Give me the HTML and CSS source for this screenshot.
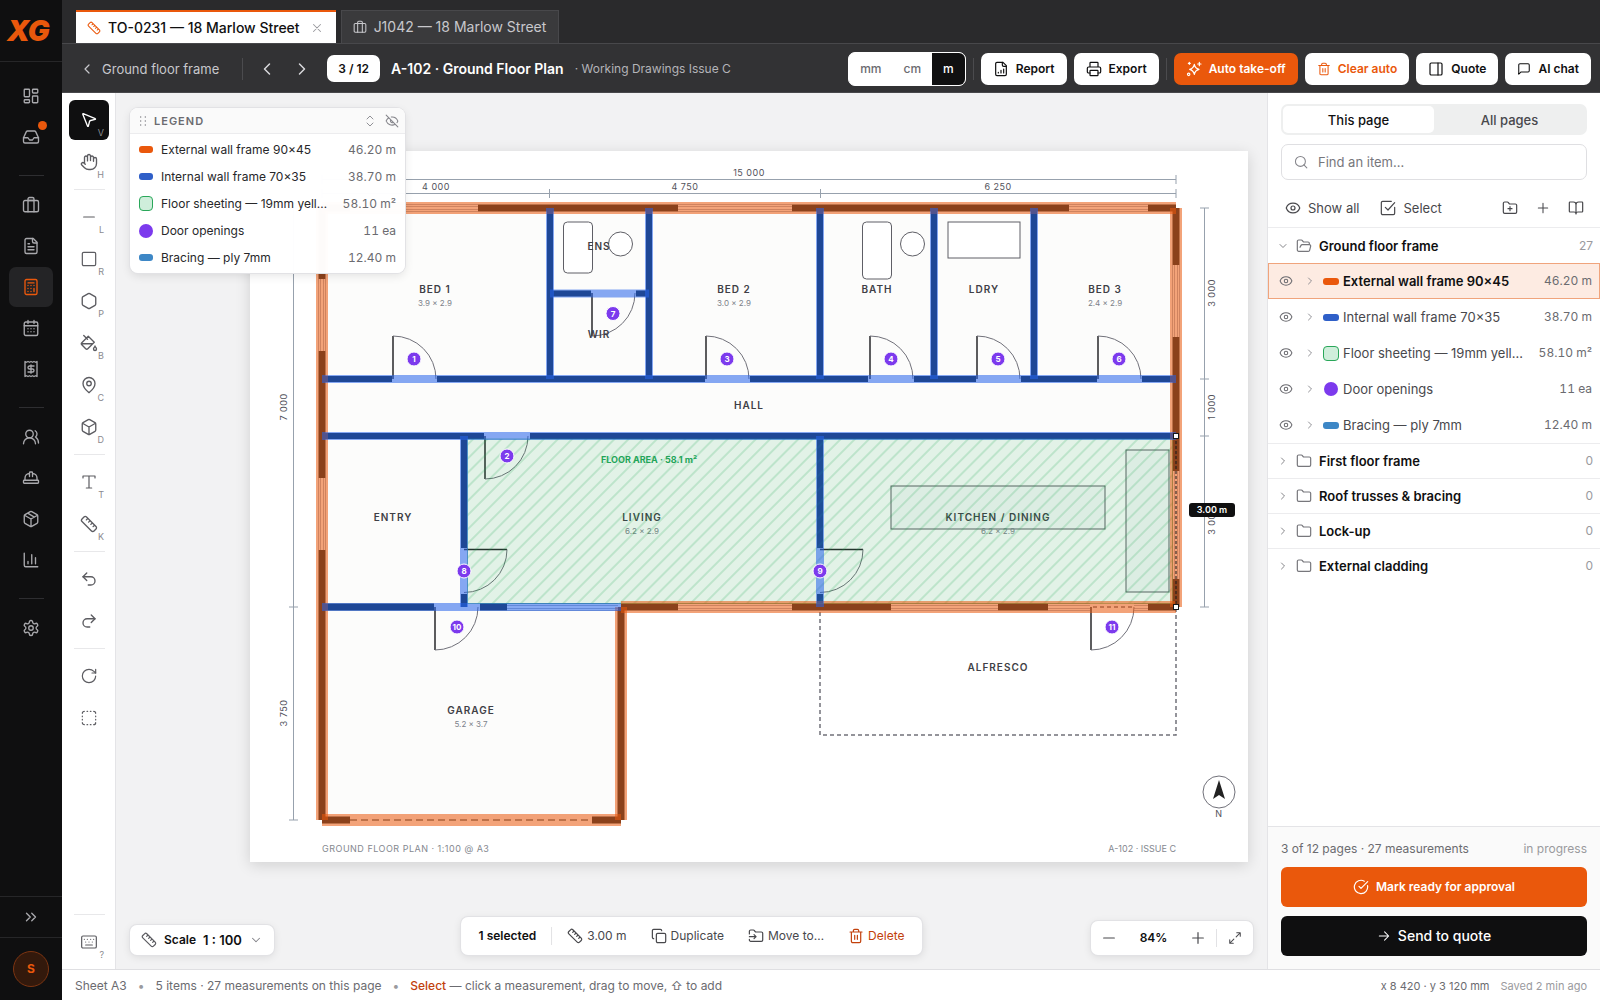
FILE: index.html
```html
<!DOCTYPE html>
<html lang="en">
<head>
<meta charset="utf-8">
<meta name="viewport" content="width=device-width, initial-scale=1">
<title>TO-0231 — 18 Marlow Street</title>
<link rel="stylesheet" href="styles.css">
</head>
<body>
<svg class="sprite" aria-hidden="true">
  <symbol id="i-dashboard" viewBox="0 0 24 24"><rect x="3" y="3" width="7" height="10" rx="1"/><rect x="14" y="3" width="7" height="5" rx="1"/><rect x="14" y="12" width="7" height="9" rx="1"/><rect x="3" y="17" width="7" height="4" rx="1"/></symbol>
  <symbol id="i-inbox" viewBox="0 0 24 24"><path d="M22 13h-6l-2 3h-4l-2-3H2"/><path d="M5.500 5.500 2 13v5a2 2 0 0 0 2 2h16a2 2 0 0 0 2-2v-5l-3.500-7.500A2 2 0 0 0 16.800 4H7.200a2 2 0 0 0-1.700 1.500z"/></symbol>
  <symbol id="i-briefcase" viewBox="0 0 24 24"><rect x="2" y="6" width="20" height="15" rx="2"/><path d="M8 21V4a2 2 0 0 1 2-2h4a2 2 0 0 1 2 2v17M8 6h8"/></symbol>
  <symbol id="i-file" viewBox="0 0 24 24"><path d="M15 2H6a2 2 0 0 0-2 2v16a2 2 0 0 0 2 2h12a2 2 0 0 0 2-2V7z"/><path d="M14 2v4a2 2 0 0 0 2 2h4M10 9H8M16 13H8M16 17H8"/></symbol>
  <symbol id="i-calc" viewBox="0 0 24 24"><rect x="4" y="2" width="16" height="20" rx="2"/><path d="M8 6.500h8M16 14v4M16 10h.01M12 10h.01M8 10h.01M12 14h.01M8 14h.01M12 18h.01M8 18h.01"/></symbol>
  <symbol id="i-calendar" viewBox="0 0 24 24"><path d="M8 2v4M16 2v4M3 9h18M8 13h.01M12 13h.01M16 13h.01M8 17h.01M12 17h.01M16 17h.01"/><rect x="3" y="4" width="18" height="18" rx="2"/></symbol>
  <symbol id="i-receipt" viewBox="0 0 24 24"><path d="M4 2v20l2-1 2 1 2-1 2 1 2-1 2 1 2-1 2 1V2l-2 1-2-1-2 1-2-1-2 1-2-1-2 1z"/><path d="M16 8h-6a2 2 0 1 0 0 4h4a2 2 0 1 1 0 4H8M12 17.500v-11"/></symbol>
  <symbol id="i-users" viewBox="0 0 24 24"><path d="M18 21a8 8 0 0 0-16 0M22 20c0-3.400-2-6.500-4-8a5 5 0 0 0-.45-8.300"/><circle cx="10" cy="8" r="5"/></symbol>
  <symbol id="i-hat" viewBox="0 0 24 24"><path d="M10 10V5a1 1 0 0 1 1-1h2a1 1 0 0 1 1 1v5M14 6a6 6 0 0 1 6 6v3M4 15v-3a6 6 0 0 1 6-6"/><rect x="2" y="15" width="20" height="4" rx="1"/></symbol>
  <symbol id="i-package" viewBox="0 0 24 24"><path d="M11 21.730a2 2 0 0 0 2 0l7-4A2 2 0 0 0 21 16V8a2 2 0 0 0-1-1.730l-7-4a2 2 0 0 0-2 0l-7 4A2 2 0 0 0 3 8v8a2 2 0 0 0 1 1.730zM12 22V12M3.300 7 12 12l8.700-5M7.500 4.270l9 5.150"/></symbol>
  <symbol id="i-chart" viewBox="0 0 24 24"><path d="M3 3v16a2 2 0 0 0 2 2h16M18 17V9M13 17V5M8 17v-3"/></symbol>
  <symbol id="i-gear" viewBox="0 0 24 24"><path d="M12.220 2h-.44a2 2 0 0 0-2 2v.18a2 2 0 0 1-1 1.730l-.43.25a2 2 0 0 1-2 0l-.15-.08a2 2 0 0 0-2.730.73l-.22.38a2 2 0 0 0 .73 2.730l.15.1a2 2 0 0 1 1 1.720v.51a2 2 0 0 1-1 1.740l-.15.09a2 2 0 0 0-.73 2.730l.22.38a2 2 0 0 0 2.730.73l.15-.08a2 2 0 0 1 2 0l.43.25a2 2 0 0 1 1 1.730V20a2 2 0 0 0 2 2h.44a2 2 0 0 0 2-2v-.18a2 2 0 0 1 1-1.730l.43-.25a2 2 0 0 1 2 0l.15.08a2 2 0 0 0 2.730-.73l.22-.39a2 2 0 0 0-.73-2.730l-.15-.08a2 2 0 0 1-1-1.740v-.5a2 2 0 0 1 1-1.740l.15-.09a2 2 0 0 0 .73-2.730l-.22-.38a2 2 0 0 0-2.730-.73l-.15.08a2 2 0 0 1-2 0l-.43-.25a2 2 0 0 1-1-1.730V4a2 2 0 0 0-2-2z"/><circle cx="12" cy="12" r="3"/></symbol>
  <symbol id="i-expand" viewBox="0 0 24 24"><path d="m6 17 5-5-5-5M13 17l5-5-5-5"/></symbol>
  <symbol id="i-ruler" viewBox="0 0 24 24"><path d="M21.300 15.300a2.400 2.400 0 0 1 0 3.400l-2.600 2.600a2.400 2.400 0 0 1-3.400 0L2.700 8.700a2.410 2.410 0 0 1 0-3.400l2.600-2.600a2.410 2.410 0 0 1 3.400 0zM14.500 12.500l2-2M11.500 9.500l2-2M8.500 6.500l2-2M17.500 15.500l2-2"/></symbol>
  <symbol id="i-x" viewBox="0 0 24 24"><path d="M18 6 6 18M6 6l12 12"/></symbol>
  <symbol id="i-left" viewBox="0 0 24 24"><path d="m15 18-6-6 6-6"/></symbol>
  <symbol id="i-right" viewBox="0 0 24 24"><path d="m9 18 6-6-6-6"/></symbol>
  <symbol id="i-down" viewBox="0 0 24 24"><path d="m6 9 6 6 6-6"/></symbol>
  <symbol id="i-report" viewBox="0 0 24 24"><path d="M15 2H6a2 2 0 0 0-2 2v16a2 2 0 0 0 2 2h12a2 2 0 0 0 2-2V7z"/><path d="M14 2v4a2 2 0 0 0 2 2h4M8 18v-1M12 18v-4M16 18v-6"/></symbol>
  <symbol id="i-print" viewBox="0 0 24 24"><path d="M6 18H4a2 2 0 0 1-2-2v-5a2 2 0 0 1 2-2h16a2 2 0 0 1 2 2v5a2 2 0 0 1-2 2h-2M6 9V3a1 1 0 0 1 1-1h10a1 1 0 0 1 1 1v6"/><rect x="6" y="14" width="12" height="8" rx="1"/></symbol>
  <symbol id="i-spark" viewBox="0 0 24 24"><path d="M12.500 5c.8 4.800 2.200 6.200 7 7.500-4.800 1.300-6.200 2.700-7 7.500-1-4.800-2.400-6.200-7-7.500 4.600-1.300 6-2.700 7-7.500zM20 2v5M22.500 4.500h-5"/><path d="M5 2v3M6.500 3.500h-3"/><circle cx="4" cy="20" r="1.800"/></symbol>
  <symbol id="i-trash" viewBox="0 0 24 24"><path d="M3 6h18M19 6v14a2 2 0 0 1-2 2H7a2 2 0 0 1-2-2V6M8 6V4a2 2 0 0 1 2-2h4a2 2 0 0 1 2 2v2M10 11v6M14 11v6"/></symbol>
  <symbol id="i-panel" viewBox="0 0 24 24"><rect x="3" y="3" width="18" height="18" rx="2"/><path d="M15 3v18"/></symbol>
  <symbol id="i-chat" viewBox="0 0 24 24"><path d="M21 15a2 2 0 0 1-2 2H7l-4 4V5a2 2 0 0 1 2-2h14a2 2 0 0 1 2 2z"/></symbol>
  <symbol id="i-cursor" viewBox="0 0 24 24"><path d="M3.700 4.200a.5.5 0 0 1 .6-.6l16 6.500a.5.5 0 0 1 0 .95l-6.200 1.600a2 2 0 0 0-1.400 1.400l-1.600 6.200a.5.5 0 0 1-.95 0z"/></symbol>
  <symbol id="i-hand" viewBox="0 0 24 24"><path d="M18 11V6a2 2 0 0 0-4 0M14 10V4a2 2 0 0 0-4 0v2M10 10.500V6a2 2 0 0 0-4 0v8M18 8a2 2 0 1 1 4 0v6a8 8 0 0 1-8 8h-2c-2.800 0-4.500-.86-5.990-2.340l-3.600-3.600a2 2 0 0 1 2.830-2.820L7 15"/></symbol>
  <symbol id="i-line" viewBox="0 0 24 24"><path d="M4 12h16"/></symbol>
  <symbol id="i-square" viewBox="0 0 24 24"><rect x="2" y="2" width="20" height="20" rx="2"/></symbol>
  <symbol id="i-hex" viewBox="0 0 24 24"><path d="M21 16V8a2 2 0 0 0-1-1.730l-7-4a2 2 0 0 0-2 0l-7 4A2 2 0 0 0 3 8v8a2 2 0 0 0 1 1.730l7 4a2 2 0 0 0 2 0l7-4A2 2 0 0 0 21 16z"/></symbol>
  <symbol id="i-bucket" viewBox="0 0 24 24"><path d="m19 11-8-8-8.600 8.600a2 2 0 0 0 0 2.800l5.200 5.200c.8.8 2 .8 2.800 0zM5 2l5 5M2 13h15M22 20a2 2 0 1 1-4 0c0-1.600 1.700-2.400 2-4 .3 1.600 2 2.400 2 4z"/></symbol>
  <symbol id="i-pin" viewBox="0 0 24 24"><path d="M20 10c0 5-5.500 10.200-7.400 11.800a1 1 0 0 1-1.200 0C9.500 20.200 4 15 4 10a8 8 0 0 1 16 0"/><circle cx="12" cy="10" r="3"/></symbol>
  <symbol id="i-cube" viewBox="0 0 24 24"><path d="M21 8a2 2 0 0 0-1-1.730l-7-4a2 2 0 0 0-2 0l-7 4A2 2 0 0 0 3 8v8a2 2 0 0 0 1 1.730l7 4a2 2 0 0 0 2 0l7-4A2 2 0 0 0 21 16zM3.300 7l8.700 5 8.700-5M12 22V12"/></symbol>
  <symbol id="i-type" viewBox="0 0 24 24"><path d="M3 6V3h18v3M12 3v18M8 21h8"/></symbol>
  <symbol id="i-undo" viewBox="0 0 24 24"><path d="M9 14 4 9l5-5"/><path d="M4 9h10.500a5.500 5.500 0 0 1 0 11H11"/></symbol>
  <symbol id="i-redo" viewBox="0 0 24 24"><path d="m15 14 5-5-5-5"/><path d="M20 9H9.500a5.500 5.500 0 0 0 0 11H13"/></symbol>
  <symbol id="i-rotate" viewBox="0 0 24 24"><path d="M22 12a10 10 0 1 1-10-10c2.800 0 5.400 1.100 7.400 3L22 7.500"/><path d="M22 2v5.500h-5.500"/></symbol>
  <symbol id="i-marquee" viewBox="0 0 24 24"><path d="M5 2a3 3 0 0 0-3 3M19 2a3 3 0 0 1 3 3M22 19a3 3 0 0 1-3 3M5 22a3 3 0 0 1-3-3M9 2h1M9 22h1M14 2h1M14 22h1M2 9v1M22 9v1M2 14v1M22 14v1"/></symbol>
  <symbol id="i-keys" viewBox="0 0 24 24"><rect x="1" y="3" width="22" height="18" rx="2"/><path d="M5 8h.01M9.500 8h.01M14.500 8h.01M19 8h.01M7 12h.01M12 12h.01M17 12h.01M7 16.500h10"/></symbol>
  <symbol id="i-grip" viewBox="0 0 24 24"><path d="M8 5h.01M8 12h.01M8 19h.01M16 5h.01M16 12h.01M16 19h.01"/></symbol>
  <symbol id="i-updown" viewBox="0 0 24 24"><path d="m6 16 6 6 6-6M6 8l6-6 6 6"/></symbol>
  <symbol id="i-eye" viewBox="0 0 24 24"><path d="M2 12.300a1 1 0 0 1 0-.7 10.700 10.700 0 0 1 20 0 1 1 0 0 1 0 .7 10.700 10.700 0 0 1-20 0z"/><circle cx="12" cy="12" r="3"/></symbol>
  <symbol id="i-eyeoff" viewBox="0 0 24 24"><path d="M10.700 5.100a10.700 10.700 0 0 1 11.200 6.600 1 1 0 0 1 0 .7 10.700 10.700 0 0 1-1.400 2.500M14.100 14.200a3 3 0 0 1-4.200-4.200M17.500 17.500a10.700 10.700 0 0 1-15.400-5.200 1 1 0 0 1 0-.7 10.700 10.700 0 0 1 4.400-5.100M2 2l20 20"/></symbol>
  <symbol id="i-search" viewBox="0 0 24 24"><circle cx="11" cy="11" r="8.500"/><path d="m22 22-5-5"/></symbol>
  <symbol id="i-check" viewBox="0 0 24 24"><path d="M22 11v9a2 2 0 0 1-2 2H4a2 2 0 0 1-2-2V4a2 2 0 0 1 2-2h13"/><path d="m8 11 4 4L22 4"/></symbol>
  <symbol id="i-folderadd" viewBox="0 0 24 24"><path d="M20 20a2 2 0 0 0 2-2V8a2 2 0 0 0-2-2h-7.900a2 2 0 0 1-1.700-.9l-.8-1.200A2 2 0 0 0 7.900 3H4a2 2 0 0 0-2 2v13a2 2 0 0 0 2 2zM12 10v6M9 13h6"/></symbol>
  <symbol id="i-folder" viewBox="0 0 24 24"><path d="M20 20a2 2 0 0 0 2-2V8a2 2 0 0 0-2-2h-7.900a2 2 0 0 1-1.700-.9l-.8-1.200A2 2 0 0 0 7.900 3H4a2 2 0 0 0-2 2v13a2 2 0 0 0 2 2z"/></symbol>
  <symbol id="i-folderopen" viewBox="0 0 24 24"><path d="m6 14 1.500-2.900A2 2 0 0 1 9.240 10H20a2 2 0 0 1 1.940 2.500l-1.540 6a2 2 0 0 1-1.950 1.500H4a2 2 0 0 1-2-2V5a2 2 0 0 1 2-2h3.900a2 2 0 0 1 1.690.9l.81 1.200a2 2 0 0 0 1.670.9H18a2 2 0 0 1 2 2v2"/></symbol>
  <symbol id="i-foldermove" viewBox="0 0 24 24"><path d="M2 9V5a2 2 0 0 1 2-2h3.900a2 2 0 0 1 1.690.9l.81 1.200a2 2 0 0 0 1.670.9H20a2 2 0 0 1 2 2v10a2 2 0 0 1-2 2H4a2 2 0 0 1-2-2v-1M2 13h10M9 16l3-3-3-3"/></symbol>
  <symbol id="i-plus" viewBox="0 0 24 24"><path d="M4 12h16M12 4v16"/></symbol>
  <symbol id="i-book" viewBox="0 0 24 24"><path d="M12 7v14M3 18a1 1 0 0 1-1-1V4a1 1 0 0 1 1-1h5a4 4 0 0 1 4 4 4 4 0 0 1 4-4h5a1 1 0 0 1 1 1v13a1 1 0 0 1-1 1h-6a3 3 0 0 0-3 3 3 3 0 0 0-3-3z"/></symbol>
  <symbol id="i-copy" viewBox="0 0 24 24"><rect x="8" y="8" width="14" height="14" rx="2"/><path d="M4 16a2 2 0 0 1-2-2V4a2 2 0 0 1 2-2h10a2 2 0 0 1 2 2"/></symbol>
  <symbol id="i-full" viewBox="0 0 24 24"><path d="M15 3h6v6M9 21H3v-6M21 3l-7 7M3 21l7-7"/></symbol>
  <symbol id="i-done" viewBox="0 0 24 24"><path d="M21.800 10A10 10 0 1 1 17 3.300M9 11l3 3L22 4"/></symbol>
  <symbol id="i-arrow" viewBox="0 0 24 24"><path d="M4 12h16M13 5l7 7-7 7"/></symbol>
</svg>

<div class="app">
  <nav class="rail" aria-label="Main">
    <a class="logo" href="#"><svg width="56" height="40" role="img" aria-label="XG"><text x="4" y="30">XG</text></svg></a>
    <div class="rail-items">
      <a href="#" aria-label="Dashboard"><svg class="ico"><use href="#i-dashboard"/></svg></a>
      <a href="#" aria-label="Inbox"><svg class="ico"><use href="#i-inbox"/></svg><span class="dot"></span></a>
      <hr>
      <a href="#" aria-label="Jobs"><svg class="ico"><use href="#i-briefcase"/></svg></a>
      <a href="#" aria-label="Quotes"><svg class="ico"><use href="#i-file"/></svg></a>
      <a class="on" href="#" aria-label="Take-offs"><svg class="ico"><use href="#i-calc"/></svg></a>
      <a href="#" aria-label="Calendar"><svg class="ico"><use href="#i-calendar"/></svg></a>
      <a href="#" aria-label="Invoices"><svg class="ico"><use href="#i-receipt"/></svg></a>
      <hr>
      <a href="#" aria-label="People"><svg class="ico"><use href="#i-users"/></svg></a>
      <a href="#" aria-label="Sites"><svg class="ico"><use href="#i-hat"/></svg></a>
      <a href="#" aria-label="Materials"><svg class="ico"><use href="#i-package"/></svg></a>
      <a href="#" aria-label="Reports"><svg class="ico"><use href="#i-chart"/></svg></a>
      <hr>
      <a href="#" aria-label="Settings"><svg class="ico"><use href="#i-gear"/></svg></a>
    </div>
    <button class="rail-expand" aria-label="Expand menu"><svg class="ico"><use href="#i-expand"/></svg></button>
    <div class="rail-user"><button class="avatar">S</button></div>
  </nav>

  <div class="main">
    <div class="tabs">
      <div class="tab on"><svg class="ico s14"><use href="#i-ruler"/></svg><a href="#">TO-0231 — 18 Marlow Street</a><button aria-label="Close tab"><svg class="ico s14"><use href="#i-x"/></svg></button></div>
      <div class="tab"><svg class="ico s14"><use href="#i-briefcase"/></svg><a href="#">J1042 — 18 Marlow Street</a></div>
    </div>

    <header class="topbar">
      <a class="back" href="#"><svg class="ico s16"><use href="#i-left"/></svg>Ground floor frame</a>
      <span class="vr"></span>
      <div class="pager">
        <button aria-label="Previous page"><svg class="ico s20"><use href="#i-left"/></svg></button>
        <button aria-label="Next page"><svg class="ico s20"><use href="#i-right"/></svg></button>
        <button class="count">3 / 12</button>
      </div>
      <h1>A-102 · Ground Floor Plan</h1>
      <span class="issue">· Working Drawings Issue C</span>
      <div class="actions">
        <div class="units"><button>mm</button><button>cm</button><button class="on">m</button></div>
        <span class="vr"></span>
        <button class="btn"><svg class="ico s16"><use href="#i-report"/></svg>Report</button>
        <button class="btn"><svg class="ico s16"><use href="#i-print"/></svg>Export</button>
        <span class="vr"></span>
        <button class="btn primary"><svg class="ico s16"><use href="#i-spark"/></svg>Auto take-off</button>
        <button class="btn danger"><svg class="ico s14"><use href="#i-trash"/></svg>Clear auto</button>
        <button class="btn"><svg class="ico s16"><use href="#i-panel"/></svg>Quote</button>
        <button class="btn"><svg class="ico s14"><use href="#i-chat"/></svg>AI chat</button>
      </div>
    </header>

    <div class="work">
      <div class="tools" role="toolbar" aria-label="Drawing tools">
        <button class="on" aria-label="Select"><svg class="ico s18"><use href="#i-cursor"/></svg><kbd>V</kbd></button>
        <button aria-label="Pan"><svg class="ico s18"><use href="#i-hand"/></svg><kbd>H</kbd></button>
        <hr>
        <button aria-label="Line"><svg class="ico s16"><use href="#i-line"/></svg><kbd>L</kbd></button>
        <button aria-label="Rectangle"><svg class="ico s16"><use href="#i-square"/></svg><kbd>R</kbd></button>
        <button aria-label="Polygon"><svg class="ico s18"><use href="#i-hex"/></svg><kbd>P</kbd></button>
        <button aria-label="Fill"><svg class="ico s18"><use href="#i-bucket"/></svg><kbd>B</kbd></button>
        <button aria-label="Count"><svg class="ico s18"><use href="#i-pin"/></svg><kbd>C</kbd></button>
        <button aria-label="Volume"><svg class="ico s18"><use href="#i-cube"/></svg><kbd>D</kbd></button>
        <hr>
        <button aria-label="Text"><svg class="ico s16"><use href="#i-type"/></svg><kbd>T</kbd></button>
        <button aria-label="Calibrate"><svg class="ico s18"><use href="#i-ruler"/></svg><kbd>K</kbd></button>
        <hr>
        <button aria-label="Undo"><svg class="ico s18"><use href="#i-undo"/></svg></button>
        <button aria-label="Redo"><svg class="ico s18"><use href="#i-redo"/></svg></button>
        <hr>
        <button aria-label="Rotate"><svg class="ico s16"><use href="#i-rotate"/></svg></button>
        <button aria-label="Marquee"><svg class="ico s16"><use href="#i-marquee"/></svg></button>
        <hr class="push">
        <button aria-label="Shortcuts"><svg class="ico s16"><use href="#i-keys"/></svg><kbd>?</kbd></button>
      </div>

      <main class="canvas">
        <svg class="sheet" viewBox="250 151 998 711" role="img" aria-label="Ground floor plan">
          <defs>
            <pattern id="hatch" width="10" height="10" patternUnits="userSpaceOnUse" patternTransform="rotate(45)"><path d="M5 0V10" stroke="#16a34a"/></pattern>
            <g id="door-up"><path class="leaf" d="M0 0V-43"/><path class="swing" d="M0-43A43 43 0 0 1 43 0"/></g>
            <g id="door-down"><path class="leaf" d="M0 0V43"/><path class="swing" d="M0 43A43 43 0 0 0 43 0"/></g>
            <g id="door-side"><path class="leaf" d="M0 0H43"/><path class="swing" d="M43 0A43 43 0 0 1 0 43"/></g>
            <path id="windows" d="M350 208H478M678 208H792M1069 208H1148M322 279V351M322 478V550M1176 265V337M1176 471V579M507 607H618M678 607H792M891 607H998M1048 607H1090M1134 607H1148"/>
          </defs>

          <path class="room" d="M322 208H1176V607H621V820H322z"/>

          <!-- dimensions -->
          <path class="dim" d="M322 179.500H1176M322 193.500H1176M322 175v9M1176 175v9M322 189v9M549.500 189v9M820.500 189v9M1176 189v9M1204.500 208V607M1200 208h9M1200 379h9M1200 436h9M1200 607h9M293.500 208V820M289 208h9M289 607h9M289 820h9"/>
          <g class="dimtext">
            <text x="749" y="176">15 000</text><text x="436" y="190">4 000</text><text x="685" y="190">4 750</text><text x="998" y="190">6 250</text>
            <text transform="translate(1215 293) rotate(-90)">3 000</text><text transform="translate(1215 407) rotate(-90)">1 000</text><text transform="translate(1215 521) rotate(-90)">3 000</text>
            <text transform="translate(287 407) rotate(-90)">7 000</text><text transform="translate(287 713) rotate(-90)">3 750</text>
          </g>

          <!-- building -->
          <rect class="alfresco" x="820" y="607" width="356" height="128"/>
          <path class="wall ext" d="M322 208H350M478 208H678M792 208H1069M1148 208H1176M322 208V279M322 351V478M322 550V820M1176 208V265M1176 337V471M1176 579V607M322 607H434M480 607H507M621 607H678M792 607H891M998 607H1048M1148 607H1176M621 607V820M322 820H350M592 820H621"/>
          <path class="wall" d="M322 379H392M437 379H705M750 379H868M914 379H976M1021 379H1097M1142 379H1176M322 436H484M530 436H1176M550 208V379M649 208V379M820 208V379M934 208V379M1034 208V379M550 293.500H591M636 293.500H649M464 436V548M464 594V607M820 436V548M820 594V607"/>
          <use class="w7" href="#windows"/><use class="w6" href="#windows"/><use class="w3" href="#windows"/><use class="w2" href="#windows"/>
          <path class="garage-door" d="M350 820H592"/>
          <use href="#door-up" x="393" y="379"/><use href="#door-up" x="706" y="379"/><use href="#door-up" x="870" y="379"/><use href="#door-up" x="977" y="379"/><use href="#door-up" x="1098" y="379"/>
          <use href="#door-down" x="485" y="436"/><use href="#door-down" x="592" y="293"/><use href="#door-down" x="435" y="607"/><use href="#door-down" x="1091" y="607"/>
          <use href="#door-side" x="464" y="549.500"/><use href="#door-side" x="820" y="549.500"/>
          <g class="fixture">
            <rect x="563.500" y="222" width="29" height="51" rx="4"/><circle cx="620.500" cy="244" r="12"/>
            <rect x="862.500" y="222" width="29" height="57" rx="4"/><circle cx="912.500" cy="244" r="12"/>
            <rect x="948" y="222" width="72" height="36"/>
            <rect class="bench" x="891" y="486" width="214" height="43"/><rect class="bench" x="1126" y="450" width="43" height="142"/>
          </g>

          <g class="roomname">
            <text x="435" y="293">BED 1</text><text x="599" y="250">ENS</text><text x="599" y="338">WIR</text><text x="734" y="293">BED 2</text><text x="877" y="293">BATH</text><text x="984" y="293">LDRY</text><text x="1105" y="293">BED 3</text>
            <text x="749" y="409">HALL</text><text x="393" y="521">ENTRY</text><text x="642" y="521">LIVING</text><text x="998" y="521">KITCHEN / DINING</text><text x="998" y="671">ALFRESCO</text><text x="471" y="714">GARAGE</text>
          </g>
          <g class="roomsize">
            <text x="435" y="306">3.9 × 2.9</text><text x="734" y="306">3.0 × 2.9</text><text x="1105" y="306">2.4 × 2.9</text><text x="642" y="534">6.2 × 2.9</text><text x="998" y="534">6.2 × 2.9</text><text x="471" y="727">5.2 × 3.7</text>
          </g>

          <!-- measurements -->
          <rect class="floor" x="467.500" y="439" width="705" height="164.500"/>
          <rect x="467.500" y="439" width="705" height="164.500" fill="url(#hatch)" opacity=".36"/>
          <text class="area" x="649" y="463">FLOOR AREA · 58.1 m²</text>
          <g class="m-ext">
            <path d="M322 208H1176"/><path d="M1176 208V607"/><path d="M1176 607H621"/><path d="M621 607V820"/><path d="M621 820H322"/><path d="M322 820V208"/>
          </g>
          <g class="m-int">
            <path d="M322 379H1176"/><path d="M322 436H1176"/><path d="M550 208V379"/><path d="M649 208V379"/><path d="M820 208V379"/><path d="M934 208V379"/><path d="M1034 208V379"/><path d="M550 293.500H649"/><path d="M464 436V607"/><path d="M820 436V607"/><path d="M322 607H621"/>
          </g>
          <path class="picked" d="M1176 436V607"/>
          <g class="handle"><rect x="1173.500" y="433.500" width="5" height="5"/><rect x="1173.500" y="604.500" width="5" height="5"/></g>
          <g class="badge">
            <circle cx="414" cy="359" r="7"/><circle cx="507" cy="456" r="7"/><circle cx="727" cy="359" r="7"/><circle cx="891" cy="359" r="7"/><circle cx="998" cy="359" r="7"/><circle cx="1119" cy="359" r="7"/><circle cx="613" cy="313.500" r="7"/><circle cx="464" cy="571" r="7"/><circle cx="820" cy="571" r="7"/><circle cx="457" cy="627" r="7"/><circle cx="1112" cy="627" r="7"/>
            <text x="414" y="362">1</text><text x="507" y="459">2</text><text x="727" y="362">3</text><text x="891" y="362">4</text><text x="998" y="362">5</text><text x="1119" y="362">6</text><text x="613" y="316.500">7</text><text x="464" y="574">8</text><text x="820" y="574">9</text><text x="457" y="630">10</text><text x="1112" y="630">11</text>
          </g>
          <rect class="tip" x="1189" y="503" width="46" height="14" rx="3"/><text class="tiptext" x="1212" y="513">3.00 m</text>

          <!-- title block -->
          <circle class="compass" cx="1219" cy="792" r="16"/><path fill="#222" d="M1219 780l6 19-6-4-6 4z"/>
          <text class="dimtext" x="1219" y="817">N</text>
          <text class="foot" x="322" y="852">GROUND FLOOR PLAN · 1:100 @ A3</text>
          <text class="foot end" x="1176" y="852">A-102 · ISSUE C</text>
        </svg>

        <section class="legend">
          <header><svg class="ico s14 grip"><use href="#i-grip"/></svg><h2>Legend</h2><button aria-label="Resize"><svg class="ico s12"><use href="#i-updown"/></svg></button><button aria-label="Hide legend"><svg class="ico s14"><use href="#i-eyeoff"/></svg></button></header>
          <ul>
            <li><i class="sw orange"></i><span>External wall frame 90×45</span><b>46.20 m</b></li>
            <li><i class="sw blue"></i><span>Internal wall frame 70×35</span><b>38.70 m</b></li>
            <li><i class="sw green"></i><span>Floor sheeting — 19mm yell…</span><b>58.10 m²</b></li>
            <li><i class="sw violet"></i><span>Door openings</span><b>11 ea</b></li>
            <li><i class="sw sky"></i><span>Bracing — ply 7mm</span><b>12.40 m</b></li>
          </ul>
        </section>

        <button class="float scale"><svg class="ico s16"><use href="#i-ruler"/></svg>Scale<span>1 : 100</span><svg class="ico s14 chev"><use href="#i-down"/></svg></button>

        <div class="float selection">
          <strong>1 selected</strong><span class="vr light"></span>
          <button><svg class="ico s16"><use href="#i-ruler"/></svg>3.00 m</button>
          <button><svg class="ico s16"><use href="#i-copy"/></svg>Duplicate</button>
          <button><svg class="ico s16"><use href="#i-foldermove"/></svg>Move to…</button>
          <button class="delete"><svg class="ico s16"><use href="#i-trash"/></svg>Delete</button>
        </div>

        <div class="float zoom">
          <button aria-label="Zoom out"><svg class="ico s16"><use href="#i-line"/></svg></button><output>84%</output><button aria-label="Zoom in"><svg class="ico s16"><use href="#i-plus"/></svg></button><span class="vr light"></span><button aria-label="Fit to screen"><svg class="ico s14"><use href="#i-full"/></svg></button>
        </div>
      </main>

      <aside class="panel">
        <div class="panel-top">
          <div class="seg"><button class="on">This page</button><button>All pages</button></div>
          <label class="search"><svg class="ico s14"><use href="#i-search"/></svg><input type="text" placeholder="Find an item…" aria-label="Find an item"></label>
          <div class="panel-tools">
            <button><svg class="ico s16"><use href="#i-eye"/></svg>Show all</button>
            <button><svg class="ico s16"><use href="#i-check"/></svg>Select</button>
            <div class="panel-icons">
              <button aria-label="New folder"><svg class="ico s16"><use href="#i-folderadd"/></svg></button>
              <button aria-label="Add item"><svg class="ico s14"><use href="#i-plus"/></svg></button>
              <button aria-label="Library"><svg class="ico s16"><use href="#i-book"/></svg></button>
            </div>
          </div>
        </div>
        <div class="tree">
          <button class="group"><svg class="ico s12"><use href="#i-down"/></svg><svg class="ico s16"><use href="#i-folderopen"/></svg><span>Ground floor frame</span><small>27</small></button>
          <div class="item on"><svg class="ico s14"><use href="#i-eye"/></svg><svg class="ico s12 chev"><use href="#i-right"/></svg><i class="sw orange"></i><span>External wall frame 90×45</span><b>46.20 m</b></div>
          <div class="item"><svg class="ico s14"><use href="#i-eye"/></svg><svg class="ico s12 chev"><use href="#i-right"/></svg><i class="sw blue"></i><span>Internal wall frame 70×35</span><b>38.70 m</b></div>
          <div class="item"><svg class="ico s14"><use href="#i-eye"/></svg><svg class="ico s12 chev"><use href="#i-right"/></svg><i class="sw green"></i><span>Floor sheeting — 19mm yell…</span><b>58.10 m²</b></div>
          <div class="item"><svg class="ico s14"><use href="#i-eye"/></svg><svg class="ico s12 chev"><use href="#i-right"/></svg><i class="sw violet"></i><span>Door openings</span><b>11 ea</b></div>
          <div class="item"><svg class="ico s14"><use href="#i-eye"/></svg><svg class="ico s12 chev"><use href="#i-right"/></svg><i class="sw sky"></i><span>Bracing — ply 7mm</span><b>12.40 m</b></div>
          <button class="group"><svg class="ico s12"><use href="#i-right"/></svg><svg class="ico s16"><use href="#i-folder"/></svg><span>First floor frame</span><small>0</small></button>
          <button class="group"><svg class="ico s12"><use href="#i-right"/></svg><svg class="ico s16"><use href="#i-folder"/></svg><span>Roof trusses &amp; bracing</span><small>0</small></button>
          <button class="group"><svg class="ico s12"><use href="#i-right"/></svg><svg class="ico s16"><use href="#i-folder"/></svg><span>Lock-up</span><small>0</small></button>
          <button class="group"><svg class="ico s12"><use href="#i-right"/></svg><svg class="ico s16"><use href="#i-folder"/></svg><span>External cladding</span><small>0</small></button>
        </div>
        <div class="panel-foot">
          <p><span>3 of 12 pages · 27 measurements</span><em>in progress</em></p>
          <button class="cta orange-bg"><svg class="ico s16"><use href="#i-done"/></svg>Mark ready for approval</button>
          <button class="cta black-bg"><svg class="ico s14"><use href="#i-arrow"/></svg>Send to quote</button>
        </div>
      </aside>
    </div>

    <footer class="status">
      <span>Sheet A3</span><span class="sep">•</span><span>5 items · 27 measurements on this page</span><span class="sep">•</span><span><mark>Select</mark> — click a measurement, drag to move, ⇧ to add</span>
      <span class="pos">x 8 420 · y 3 120 mm</span><span class="saved">Saved 2 min ago</span>
    </footer>
  </div>
</div>
</body>
</html>
```
FILE: styles.css
```css
* { box-sizing: border-box; }
body { margin: 0; font: 13px/20px Inter, "Noto Sans", sans-serif; color: #101011; background: #f2f2f3; }
button, input { font: inherit; color: inherit; }
button { background: none; border: 0; padding: 0; display: inline-flex; align-items: center; cursor: pointer; }
a { color: inherit; text-decoration: none; }
h1, h2, p, ul { margin: 0; padding: 0; }
ul { list-style: none; }
hr { border: 0; height: 1px; width: 31px; margin: 5px 0; background: #e8e8ea; flex: none; }
.sprite { display: none; }

.ico { width: 18px; height: 18px; flex: none; display: block; fill: none; stroke: currentColor; stroke-width: 1.8; stroke-linecap: round; stroke-linejoin: round; overflow: visible; }
.s12 { width: 12px; height: 12px; }
.s14 { width: 14px; height: 14px; }
.s16 { width: 16px; height: 16px; }
.s18 { width: 18px; height: 18px; }
.s20 { width: 20px; height: 20px; }

.app { display: flex; min-height: 100vh; }
.main { flex: 1; min-width: 0; display: flex; flex-direction: column; }
.vr { width: 1px; height: 22px; background: #4b4b4e; flex: none; }
.vr.light { height: 18px; background: #e2e2e5; }

/* left rail */
.rail { width: 62px; flex: none; background: #0f0f10; color: #a9a9ad; display: flex; flex-direction: column; }
.logo { height: 62px; display: flex; align-items: center; justify-content: center; border-bottom: 1px solid #262628; }
.logo text { font: italic 900 29px Inter, sans-serif; fill: #ea580c; }
.rail-items { flex: 1; display: flex; flex-direction: column; align-items: center; gap: 1px; padding-top: 14px; }
.rail-items a { position: relative; width: 44px; height: 40px; border-radius: 7px; display: flex; align-items: center; justify-content: center; }
.rail-items a.on { background: #242426; color: #ea580c; }
.rail-items hr { width: 25px; margin: 17px 0 8px; background: #2e2e31; }
.dot { position: absolute; top: 4px; right: 6px; width: 9px; height: 9px; border-radius: 50%; background: #ea580c; }
.rail-expand { height: 41px; justify-content: center; border-top: 1px solid #262628; }
.rail-user { height: 63px; display: flex; align-items: center; justify-content: center; border-top: 1px solid #262628; }
.avatar { width: 36px; height: 36px; border-radius: 50%; justify-content: center; background: #33190c; border: 1px solid #7d3512; color: #ea580c; font-weight: 700; font-size: 12px; }

/* tabs */
.tabs { height: 44px; background: #2a2a2c; border-bottom: 1px solid #48484b; padding: 10px 14px 0; display: flex; gap: 5px; font-size: 14px; }
.tab { display: flex; align-items: center; gap: 7px; padding: 0 12px 0 11px; color: #c8c8cc; background: #3a3a3c; border: 1px solid #48484b; border-bottom: 0; white-space: nowrap; }
.tab.on { color: #101011; background: #fff; border: 0; border-top: 2px solid #ea580c; font-weight: 500; }
.tab.on > .ico { color: #ea580c; }
.tab button { color: #9a9a9e; margin-left: 3px; }

/* top bar */
.topbar { min-height: 49px; background: #323234; border-bottom: 1px solid #48484b; color: #fff; display: flex; align-items: center; padding: 1px 9px 0 17px; }
.back { display: flex; align-items: center; gap: 7px; color: #c8c8cc; margin-right: 23px; white-space: nowrap; }
.pager { display: flex; align-items: center; gap: 15px; margin-left: 14px; color: #d8d8dc; }
.count { background: #fff; color: #101011; height: 27px; padding: 0 11px; border-radius: 7px; font-size: 12px; font-weight: 600; white-space: nowrap; }
.topbar h1 { font-size: 14px; font-weight: 600; margin-left: 11px; white-space: nowrap; }
.issue { color: #b4b4b8; margin-left: 11px; font-size: 12px; white-space: nowrap; }
.actions { margin-left: auto; display: flex; align-items: center; gap: 7px; font-size: 12px; }
.units { display: flex; height: 34px; border: 1px solid #fff; border-radius: 7px; overflow: hidden; background: #fff; color: #6b6b70; font-weight: 500; }
.units button { padding: 0 11px; }
.units .on { background: #101011; color: #fff; }
.btn { height: 32px; padding: 0 12px; gap: 7px; border-radius: 7px; background: #fff; color: #101011; font-weight: 600; white-space: nowrap; }
.primary { background: #ea580c; color: #fff; }
.danger { color: #ea580c; }

/* work area */
.work { flex: 1; display: flex; min-height: 0; }
.tools { width: 54px; flex: none; background: #fff; border-right: 1px solid #e4e4e7; display: flex; flex-direction: column; align-items: center; gap: 2px; padding: 7px 6px 7px 7px; color: #5c5c61; }
.tools button { position: relative; width: 40px; height: 40px; border-radius: 6px; justify-content: center; flex: none; }
.tools .on { background: #0f0f10; color: #fff; }
.tools .push { margin-top: auto; }
kbd { position: absolute; right: 5px; bottom: 1px; font: 9px/12px Inter, sans-serif; color: #8a8a8f; }

.canvas { flex: 1; min-width: 0; position: relative; background: #f2f2f3; }
.sheet { display: block; width: calc(100% - 153px); margin: 58px 0 100px 134px; background: #fff; box-shadow: 0 3px 14px rgba(0, 0, 0, .14); font-family: Inter, sans-serif; }

.legend { position: absolute; left: 14px; top: 15px; width: 275px; background: rgba(255, 255, 255, .98); border-radius: 8px; box-shadow: 0 0 0 1px #e2e2e5, 0 3px 10px rgba(0, 0, 0, .1); }
.legend header { display: flex; align-items: center; height: 26px; padding: 0 6px; border-bottom: 1px solid #ececee; color: #84848a; border-radius: 8px 8px 0 0; background: #fafafa; }
.legend h2 { flex: 1; margin-left: 4px; font-size: 11px; font-weight: 600; letter-spacing: 1px; text-transform: uppercase; color: #6b6b70; }
.legend header button { margin-left: 9px; }
.legend ul { padding: 2px 9px; }
.legend li { display: flex; align-items: center; height: 27px; font-size: 12px; color: #27272a; }
.legend li span { flex: 1; margin-left: 8px; white-space: nowrap; }
.legend b, .item b { font-size: 12px; font-weight: 400; color: #6b6b70; font-variant-numeric: tabular-nums; white-space: nowrap; }
.grip { stroke-width: 2.5; }

.sw { width: 14px; height: 7px; border-radius: 3px; flex: none; }
.orange { background: #ea580c; }
.blue { background: #2f5fc8; }
.sky { background: #3d87c6; }
.green { height: 15px; border-radius: 4px; background: #cfeedb; border: 1px solid #2aa75a; }
.violet { height: 14px; border-radius: 50%; background: #7c3aed; }

.float { position: absolute; bottom: 14px; background: #fff; border-radius: 7px; box-shadow: 0 0 0 1px #e2e2e5, 0 2px 8px rgba(0, 0, 0, .1); display: flex; align-items: center; white-space: nowrap; font-size: 12px; }
.scale { left: 14px; height: 30px; padding: 0 11px; gap: 7px; font-weight: 600; }
.scale span { font-size: 13px; }
.scale .ico { color: #5c5c61; }
.scale .chev { color: #84848a; }
.selection { left: 50%; transform: translateX(-50%); height: 38px; padding: 0 18px; gap: 24px; color: #48484c; }
.selection strong { font-weight: 600; color: #101011; margin-right: -9px; }
.selection .vr { margin-right: -9px; }
.selection button { gap: 4px; }
.selection .delete { color: #c2410c; }
.zoom { right: 14px; height: 34px; padding: 0 3px; color: #48484c; }
.zoom button { width: 30px; height: 30px; justify-content: center; }
.zoom output { width: 59px; text-align: center; font-weight: 600; color: #101011; }
.zoom .vr { margin: 0 3px; }

/* plan drawing */
.room { fill: #fcfcfb; }
.dim { fill: none; stroke: #97a1ad; }
.dimtext { font-size: 9px; fill: #52525b; text-anchor: middle; letter-spacing: 0.5px; }
.alfresco { fill: none; stroke: #71717a; stroke-width: 1.5; stroke-dasharray: 4 3; }
.wall { fill: none; stroke: #17262f; stroke-width: 6; }
.ext { stroke-width: 7; }
.w7 { stroke: #64748b; stroke-width: 7; }
.w6 { stroke: #fff; stroke-width: 6; }
.w3 { stroke: #64748b; stroke-width: 3; }
.w2 { stroke: #fff; stroke-width: 2; }
.garage-door { fill: none; stroke: #17262f; stroke-dasharray: 7 4; }
.leaf { stroke: #27272a; stroke-width: 1.5; }
.swing { fill: none; stroke: #71717a; }
.fixture { fill: #fff; stroke: #5f5f66; }
.bench { fill: #f5f6f7; }
.roomname { font-size: 10px; font-weight: 600; fill: #3f3f46; letter-spacing: 1px; text-anchor: middle; }
.roomsize { font-size: 8px; fill: #7d828a; text-anchor: middle; }
.floor { fill: #16a34a; fill-opacity: .11; stroke: #16a34a; stroke-opacity: .5; }
.area { font-size: 9px; font-weight: 700; fill: #22a559; text-anchor: middle; }
.m-ext { stroke: #ea580c; stroke-width: 12; }
.m-int { stroke: #2563eb; stroke-width: 8; }
.m-ext path, .m-int path { opacity: .55; }
.picked { stroke: #17181a; stroke-dasharray: 3 2; }
.handle { fill: #fff; stroke: #17181a; }
.badge circle { fill: #7c3aed; stroke: #fff; }
.badge text { font-size: 8px; font-weight: 700; fill: #fff; text-anchor: middle; }
.tip { fill: #0f0f10; }
.tiptext { font-size: 9px; font-weight: 600; fill: #fff; text-anchor: middle; }
.compass { fill: none; stroke: #71717a; }
.foot { font-size: 9px; fill: #84888f; letter-spacing: 0.5px; }
.end { text-anchor: end; letter-spacing: 0; }

/* right panel */
.panel { width: 333px; flex: none; background: #fff; border-left: 1px solid #e4e4e7; display: flex; flex-direction: column; }
.panel-top { padding: 11px 13px 0; border-bottom: 1px solid #ececee; }
.seg { display: flex; height: 31px; padding: 2px; border-radius: 7px; background: #eeefef; color: #48484c; font-weight: 500; }
.seg button { flex: 1; justify-content: center; border-radius: 5px; }
.seg .on { background: #fff; color: #101011; }
.search { display: flex; align-items: center; gap: 10px; height: 36px; margin-top: 9px; padding: 0 12px; border: 1px solid #dfdfe2; border-radius: 7px; color: #84848a; }
.search input { flex: 1; min-width: 0; border: 0; outline: 0; background: none; padding: 0; }
.search input::placeholder { color: #77777c; opacity: 1; }
.panel-tools { display: flex; align-items: center; height: 47px; padding: 9px 3px 0 4px; gap: 21px; color: #48484c; }
.panel-tools button { gap: 7px; }
.panel-icons { display: flex; align-items: center; gap: 18px; margin-left: auto; }
.group { width: 100%; height: 35px; padding: 0 7px 0 9px; gap: 7px; font-weight: 600; border-top: 1px solid #ececee; text-align: left; }
.group:first-child { border-top: 0; }
.group .ico { color: #77777c; }
.group span { flex: 1; }
.group small { font-size: 12px; font-weight: 400; color: #9a9a9e; }
.item { display: flex; align-items: center; height: 36px; padding: 0 7px 0 10px; border: 1px solid transparent; color: #48484c; white-space: nowrap; }
.item .ico { color: #6b6b70; }
.item .chev { margin: 0 7px 0 11px; color: #84848a; }
.item .sw { width: 16px; }
.item .violet { width: 14px; margin: 0 1px; }
.item span { flex: 1; margin-left: 4px; }
.item.on { background: #fdebe2; border-color: #f0a47c; }
.item.on span { color: #101011; font-weight: 600; }
.panel-foot { margin-top: auto; padding: 12px 13px 13px; background: #fafafa; border-top: 1px solid #e4e4e7; color: #6b6b70; }
.panel-foot p { display: flex; justify-content: space-between; margin-bottom: 8px; font-size: 12px; }
.panel-foot em { font-style: normal; color: #9a9a9e; }
.cta { width: 100%; height: 40px; justify-content: center; gap: 7px; border-radius: 6px; color: #fff; font-weight: 500; }
.cta + .cta { margin-top: 9px; }
.orange-bg { background: #ea580c; font-size: 12px; font-weight: 600; }
.black-bg { background: #0f0f10; font-size: 14px; }

/* status bar */
.status { height: 31px; flex: none; padding: 1px 13px 0; display: flex; align-items: center; gap: 11px; background: #fff; border-top: 1px solid #dfdfe2; color: #6b6b70; font-size: 12px; white-space: nowrap; }
.status mark { background: none; color: #c2410c; font-weight: 500; }
.status .sep, .status .saved { color: #9a9a9e; }
.pos { margin-left: auto; }
.pos, .saved { font-size: 11px; }
```
